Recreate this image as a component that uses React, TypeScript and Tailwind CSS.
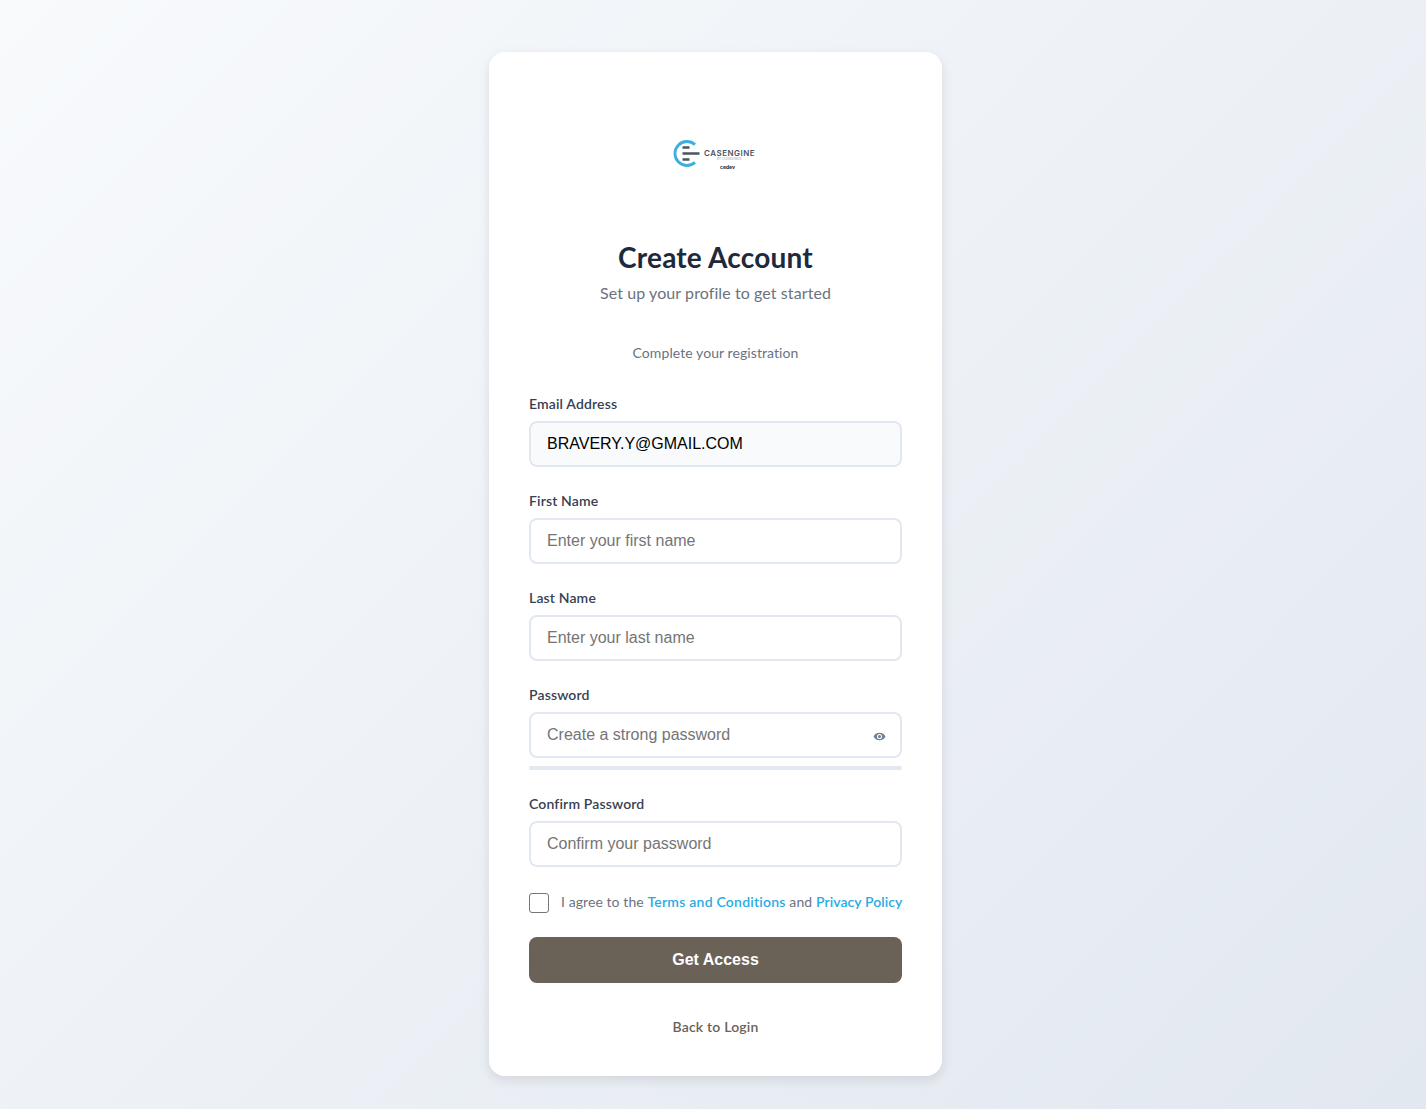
function Logo() {
  return (
    <div className="h-[32px] w-[84px] relative">
      <svg width="28" height="28" viewBox="0 0 28 28" className="absolute left-[-1px] top-0" fill="none">
        <path d="M22 4.600A12 12 0 1 0 22 22.400" stroke="#3daee3" strokeWidth="2.800" />
        <path d="M9.500 7.500h7M9.500 13.500h17M9.500 19.500h7" stroke="#4b5563" strokeWidth="2.400" />
      </svg>
      <span className="absolute left-[30.5px] top-[8px] text-[8px] tracking-[0.5px] leading-[10px] font-semibold text-[#4b5563] font-['Inter',sans-serif] whitespace-nowrap">CASENGINE</span>
      <span className="absolute left-[43.5px] top-[17px] text-[3px] leading-[4px] text-[#9ca3af] font-['Inter',sans-serif] whitespace-nowrap">BY COGNIZANCE</span>
      <span className="absolute left-[46.5px] top-[24px] text-[5px] leading-[6px] font-bold text-[#1f2937] font-['Inter',sans-serif]">cedev</span>
    </div>
  );
}

function Field({ label, placeholder, value, eye }: { label: string; placeholder?: string; value?: string; eye?: boolean }) {
  return (
    <div>
      <label className="block text-[14px] leading-[19px] font-semibold tracking-[0.15px] text-[#374151] mb-[8px]">{label}</label>
      <div className="relative">
        <input
          readOnly
          value={value}
          placeholder={placeholder}
          className={`block w-full h-[46px] px-[16px] border-2 border-[#e2e8f0] rounded-[8px] text-[16px] font-['Liberation_Sans',Arial,sans-serif] outline-none placeholder:text-[#757575] ${value ? "bg-[#f8fafc] text-black" : "bg-white"}`}
        />
        {eye && (
          <svg viewBox="0 0 24 24" className="absolute right-[16px] top-[18px] w-[13px] h-[13px]" fill="#718096">
            <path d="M12 5C7 5 2.700 8.100 1 12c1.700 3.900 6 7 11 7s9.300-3.100 11-7c-1.700-3.900-6-7-11-7zm0 11.700a4.700 4.700 0 1 1 0-9.400 4.700 4.700 0 0 1 0 9.400zm0-7.500a2.800 2.800 0 1 0 0 5.600 2.800 2.800 0 0 0 0-5.600z" />
          </svg>
        )}
      </div>
    </div>
  );
}

export default function App() {
  return (
    <div className="min-h-[1109px] bg-[linear-gradient(135deg,#f8fafc_0%,#e2e8f0_100%)] flex justify-center pl-[5px] pt-[52px] pb-[33px] font-['Lato',sans-serif]">
      <div className="w-[453px] h-[1024px] bg-white rounded-[16px] shadow-[0_4px_12px_rgba(0,0,0,0.1)] px-[40px] pt-[88px]">
        <div className="flex justify-center">
          <Logo />
        </div>
        <h1 className="mt-[66px] text-center text-[28px] leading-[38px] font-bold tracking-[0.2px] text-[#1e293b]">Create Account</h1>
        <p className="mt-[6px] text-center text-[16px] leading-[22px] tracking-[0.09px] text-[#6b7280]">Set up your profile to get started</p>
        <p className="mt-[39px] text-center text-[14px] leading-[19px] tracking-[0.08px] text-[#6b7280]">Complete your registration</p>

        <div className="mt-[32px] flex flex-col gap-[24px]">
          <Field label="Email Address" value="BRAVERY.Y@GMAIL.COM" />
          <Field label="First Name" placeholder="Enter your first name" />
          <Field label="Last Name" placeholder="Enter your last name" />
          <div>
            <Field label="Password" placeholder="Create a strong password" eye />
            <div className="mt-[8px] h-[4px] rounded-[2px] bg-[#e2e8f0]" />
          </div>
          <Field label="Confirm Password" placeholder="Confirm your password" />
        </div>

        <div className="mt-[26px] flex items-start gap-[12px]">
          <input type="checkbox" className="w-[20px] h-[20px] shrink-0 appearance-none border border-[#767676] rounded-[3px] bg-white" />
          <span className="text-[14px] leading-[18px] tracking-[0.08px] text-[#6b7280] whitespace-nowrap">
            I agree to the <a className="text-[#29abe2] font-semibold tracking-[0.23px]">Terms and Conditions</a> and <a className="text-[#29abe2] font-semibold">Privacy Policy</a>
          </span>
        </div>

        <button className="mt-[24px] block w-full h-[46px] rounded-[8px] bg-[#6b6257] text-white text-[16px] font-bold font-['Liberation_Sans',Arial,sans-serif]">Get Access</button>

        <div className="mt-[34px] text-center text-[14px] leading-[19px] font-semibold tracking-[0.2px] text-[#6b6257]">Back to Login</div>
      </div>
    </div>
  );
}
